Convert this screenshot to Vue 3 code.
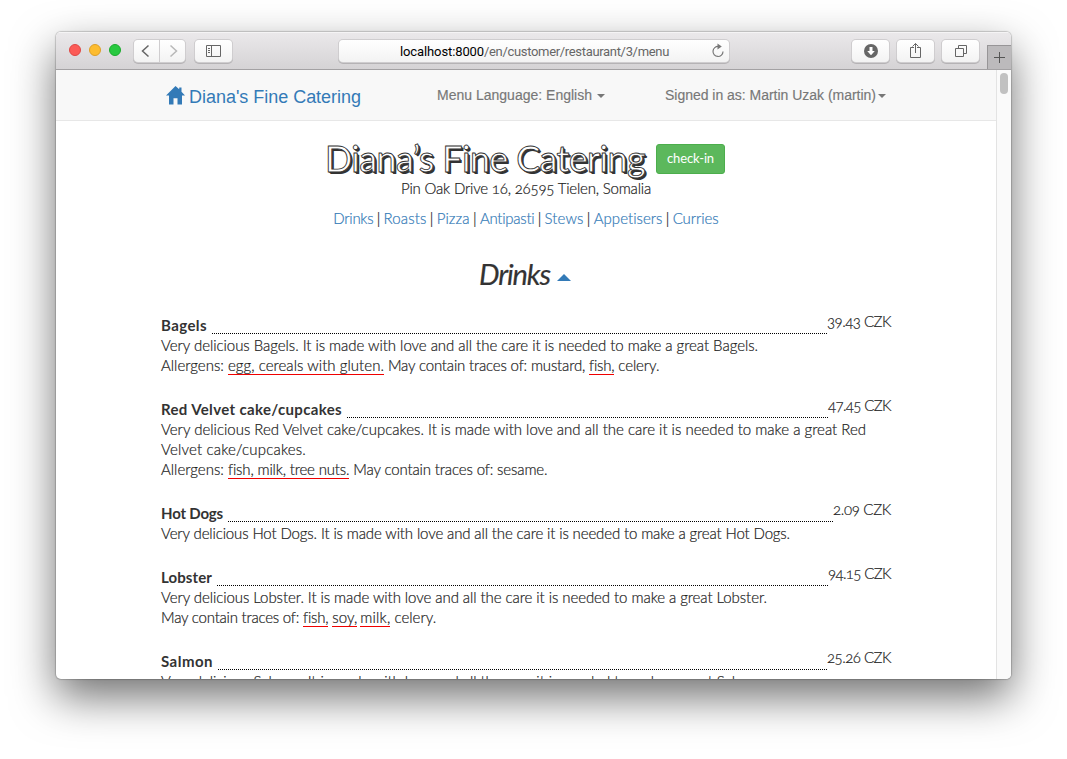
<script setup>
// Tracks a run of text out (or in) so that it fills the given width.
const vFit = {
  mounted(el, { value }) {
    if (!value) return
    const natural = el.getBoundingClientRect().width
    el.style.letterSpacing = (value - natural) / el.textContent.length + 'px'
  }
}

const t = (text, w, alert = false) => ({ text, w, alert })

const categories = [
  ['Drinks', 40], ['Roasts', 43], ['Pizza', 33], ['Antipasti', 55],
  ['Stews', 39], ['Appetisers', 69], ['Curries', 46]
]

const dishes = [
  {
    name: 'Bagels', w: 46, price: '39.43 CZK', pw: 64,
    lines: [
      [t('Very delicious Bagels. It is made with love and all the care it is needed to make a great Bagels.', 597)],
      [t('Allergens: ', 67), t('egg, cereals with gluten.', 156, true), t(' May contain traces of: mustard, ', 205), t('fish,', 25, true), t(' celery.', 45)]
    ]
  },
  {
    name: 'Red Velvet cake/cupcakes', w: 181, price: '47.45 CZK', pw: 63,
    lines: [
      [t('Very delicious Red Velvet cake/cupcakes. It is made with love and all the care it is needed to make a great Red', 705)],
      [t('Velvet cake/cupcakes.', 145)],
      [t('Allergens: ', 67), t('fish, milk, tree nuts.', 121, true), t(' May contain traces of: sesame.', 198)]
    ]
  },
  {
    name: 'Hot Dogs', w: 62, price: '2.09 CZK', pw: 58,
    lines: [
      [t('Very delicious Hot Dogs. It is made with love and all the care it is needed to make a great Hot Dogs.', 629)]
    ]
  },
  {
    name: 'Lobster', w: 51, price: '94.15 CZK', pw: 63,
    lines: [
      [t('Very delicious Lobster. It is made with love and all the care it is needed to make a great Lobster.', 606)],
      [t('May contain traces of: ', 142), t('fish,', 25, true), t(' ', 4), t('soy,', 25, true), t(' ', 3), t('milk,', 30, true), t(' celery.', 46)]
    ]
  },
  {
    name: 'Salmon', w: 52, price: '25.26 CZK', pw: 64,
    lines: [
      [t('Very delicious Salmon. It is made with love and all the care it is needed to make a great Salmon.', 606)]
    ]
  }
]
</script>

<template>
  <div class="desktop">
    <div class="window">
      <header class="toolbar">
        <div class="lights"><i class="red"></i><i class="yellow"></i><i class="green"></i></div>
        <div class="history">
          <button class="tb half left"><svg width="25" height="22"><path d="M14.500 5.500 8.500 11l6 5.500" fill="none" stroke="#666" stroke-width="1.500" /></svg></button>
          <button class="tb half right"><svg width="25" height="22"><path d="M10.500 5.500 16.500 11l-6 5.500" fill="none" stroke="#b8b8b8" stroke-width="1.500" /></svg></button>
        </div>
        <button class="tb side">
          <svg width="37" height="22" fill="none" stroke="#666"><path d="M11.500 5.500h14v11h-14zM16.500 5.500v11" /><path d="M13 8.500h2M13 10.500h2M13 12.500h2" /></svg>
        </button>
        <div class="address">
          <span v-fit="84" class="host">localhost:8000</span><span v-fit="185" class="path">/en/customer/restaurant/3/menu</span>
          <svg class="reload" width="14" height="16"><path d="M7.500 3.500A5 5 0 1 0 12 8.500" fill="none" stroke="#777" stroke-width="1.200" /><path d="M6.500.5v6L10.800 3.500z" fill="#777" /></svg>
        </div>
        <div class="actions">
          <button class="tb"><svg width="37" height="22"><circle cx="19" cy="11" r="7" fill="#666" /><path d="M17.500 7h3v4h2.300L19 15.200 15.200 11h2.300z" fill="#fff" /></svg></button>
          <button class="tb"><svg width="37" height="22" fill="none" stroke="#666"><path d="M17 7.500h-3.500v10h10v-10H20M18.500 13V3.500M15.500 6.500l3-3 3 3" /></svg></button>
          <button class="tb"><svg width="37" height="22" fill="none" stroke="#666"><path d="M13.500 8.500h8v8h-8zM16.500 8V5.500h8v8H22" /></svg></button>
        </div>
        <button class="newtab"><svg width="23" height="24"><path d="M6 11.500h11M11.500 6v11" stroke="#555" /></svg></button>
      </header>

      <div class="viewport">
        <main class="page">
          <nav class="navbar">
            <a class="brand">
              <svg width="20" height="19"><path d="M9.500 0 0 9.400h3V18.500h4.500v-6.200h4v6.200H16V9.400h3L15.500 5.700V1.500H13.200v1.800z" fill="#337ab7" /></svg>
              <span v-fit="172">Diana's Fine Catering</span>
            </a>
            <div class="menu lang"><span v-fit="155">Menu Language: English</span><i class="caret"></i></div>
            <div class="menu user"><span v-fit="211">Signed in as: Martin Uzak (martin)</span><i class="caret"></i></div>
          </nav>

          <section class="intro">
            <div class="title-row">
              <h1 v-fit="320">Diana’s Fine Catering</h1>
              <button class="checkin"><span v-fit="47">check-in</span></button>
            </div>
            <p class="addr"><span v-fit="250">Pin Oak Drive 16, 26595 Tielen, Somalia</span></p>
            <div class="cats">
              <template v-for="([name, w], i) in categories" :key="name">
                <span v-if="i" class="bar">|</span><a v-fit="w">{{ name }}</a>
              </template>
            </div>
            <h2><span v-fit="71">Drinks</span><i class="up"></i></h2>
          </section>

          <article v-for="d in dishes" :key="d.name" class="dish">
            <div class="head">
              <b v-fit="d.w">{{ d.name }}</b>
              <i class="dots"></i>
              <span v-fit="d.pw" class="price">{{ d.price }}</span>
            </div>
            <div v-for="(line, i) in d.lines" :key="i" class="line">
              <span v-for="(s, j) in line" :key="j" v-fit="s.w" :class="{ alert: s.alert }">{{ s.text }}</span>
            </div>
          </article>
        </main>
        <div class="scroll"><i></i></div>
      </div>
    </div>
  </div>
</template>

<style>
body { margin: 0; background: #fff; overflow: hidden; }
</style>

<style scoped>
* { box-sizing: border-box; }
.desktop { width: 1067px; height: 759px; padding: 32px 56px 0; overflow: hidden; background: #fff; font-variant-ligatures: none; }
.window { width: 955px; height: 647px; display: flex; flex-direction: column; border-radius: 5px; overflow: hidden; background: #fff; box-shadow: 0 0 1px 1px rgba(0,0,0,.18), 0 18px 44px rgba(0,0,0,.56); }
button { border: 0; padding: 0; margin: 0; background: none; }
svg { display: block; flex: none; }
span, b, a { white-space: pre; flex: none; }

.toolbar { height: 38px; flex: none; display: flex; align-items: flex-start; padding: 8px 0 0 13px; background: linear-gradient(#ebe9eb, #d5d3d5); border-bottom: 1px solid #a3a1a3; box-shadow: inset 0 1px #f5f4f5; }
.lights { display: flex; gap: 8px; padding-top: 4px; width: 65px; }
.lights i { width: 12px; height: 12px; border-radius: 50%; border: 1px solid; }
.red { background: #fc5b57; border-color: #df4744 !important; }
.yellow { background: #fdbc2f; border-color: #de9f25 !important; }
.green { background: #28c940; border-color: #1aab2c !important; }
.tb { width: 37px; height: 22px; border-radius: 4px; background: linear-gradient(#fff, #f3f3f3); box-shadow: 0 0 0 1px #cfcdcf, 0 1px 0 1px #b5b3b5; }
.history { display: flex; gap: 1px; margin-right: 10px; }
.half { width: 25px; }
.left { border-radius: 4px 0 0 4px; }
.right { border-radius: 0 4px 4px 0; }
.address { display: flex; width: 390px; height: 22px; margin-left: 107px; padding-left: 61px; border-radius: 4px; background: linear-gradient(#fff, #f3f3f3); box-shadow: 0 0 0 1px #cfcdcf, 0 1px 0 1px #b5b3b5; font: 13px/23px Roboto, sans-serif; color: #000; }
.path { color: #666; }
.reload { margin: 3px 0 0 42px; }
.actions { display: flex; gap: 8px; margin-left: 123px; }
.newtab { width: 24px; height: 24px; margin: 5px 0 0 auto; background: #bcbabc; border: solid #979597; border-width: 1px 0 0 1px; }

.viewport { flex: 1; min-height: 0; display: flex; }
.page { width: 940px; overflow: hidden; font: 300 15px/18px Lato, sans-serif; color: #222; -webkit-text-stroke: .2px currentColor; font-variant-numeric: oldstyle-nums; }
.scroll { width: 15px; background: #fafafa; border-left: 1px solid #e3e3e3; display: flex; justify-content: center; padding-top: 3px; }
.scroll i { width: 8px; height: 21px; border-radius: 4px; background: #c1c1c1; }
.navbar { height: 51px; display: flex; background: #f8f8f8; border-bottom: 1px solid #e7e7e7; padding-left: 110px; font: 14px/20px "Liberation Sans", sans-serif; color: #777; -webkit-text-stroke: 0; }
.brand { width: 271px; display: flex; gap: 3px; padding-top: 16px; color: #337ab7; font-size: 18px; line-height: 22px; }
.menu { display: flex; align-items: center; height: 20px; margin-top: 15px; -webkit-text-stroke: .15px #777; }
.lang { width: 228px; }
.caret { border: 4px solid transparent; border-top-color: #777; border-bottom: 0; margin-top: 2px; }
.lang .caret { margin-left: 5px; }
.user .caret { margin-left: 2px; }

.intro { display: flex; flex-direction: column; align-items: center; padding-top: 19px; }
.title-row { display: flex; height: 39px; gap: 11px; padding-top: 4px; margin-right: 2px; }
h1 { margin: -6px 0 0; font: 400 36px/40px Lato, sans-serif; color: #fff; -webkit-text-stroke: .9px #333; text-shadow: 1px 1px #333, 2px 2px #333; white-space: pre; flex: none; }
.checkin { width: 69px; height: 30px; border-radius: 3px; background: #5cb85c; border: 1px solid #4cae4c; color: #fff; font: 400 13px/18px Lato, sans-serif; -webkit-text-stroke: 0; display: flex; justify-content: center; padding-top: 4px; }
.addr { margin: 0; height: 20px; }
.cats { display: flex; height: 20px; margin-top: 10px; }
.cats a { color: #337ab7; }
.bar { width: 10.200px; text-align: center; }
h2 { margin: 29px 2px 27px 0; height: 31px; display: flex; align-items: center; font: italic 400 29px/31px Lato, sans-serif; color: #333; }
.up { border: 7.500px solid transparent; border-bottom-color: #337ab7; border-top: 0; margin: 7px 0 0 7px; }

.dish { width: 730px; margin: 0 0 24px 105px; }
.head { display: flex; height: 20px; }
.head b { font-weight: 700; color: #333; -webkit-text-stroke: 0; }
.dots { flex: 1; height: 18px; margin-left: 5px; border-bottom: 1px dotted #000; }
.price { margin-top: -4px; }
.line { display: flex; height: 20px; }
.alert { height: 19px; border-bottom: 1px solid #f00000; }
</style>
